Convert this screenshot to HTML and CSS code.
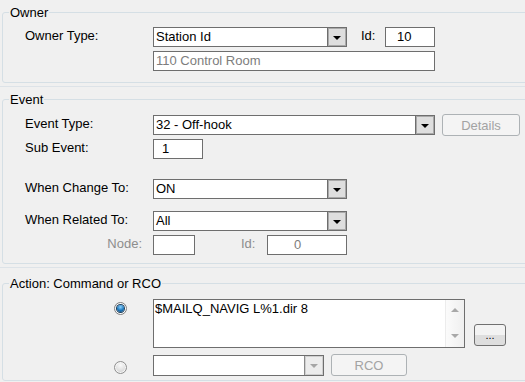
FILE: index.html
```html
<!DOCTYPE html>
<html lang="en">
<head>
    <meta charset="UTF-8">
    <title>Event Trigger</title>
    <link rel="stylesheet" href="styles.css">
</head>
<body>
    <!-- Owner -->
    <fieldset class="group owner">
        <legend>Owner</legend>
        <div class="row">
            <span class="lbl">Owner Type:</span>
            <div class="combo w194"><span class="val">Station Id</span><span class="arrow"></span></div>
            <span class="lbl-id id-owner">Id:</span>
            <div class="box id-box">10</div>
        </div>
        <div class="row gap4">
            <span class="lbl"></span>
            <div class="box dim w282">110 Control Room</div>
        </div>
    </fieldset>
    <div class="sep"></div>

    <!-- Event -->
    <fieldset class="group event">
        <legend>Event</legend>
        <div class="row">
            <span class="lbl">Event Type:</span>
            <div class="combo w282"><span class="val">32 - Off-hook</span><span class="arrow"></span></div>
            <button class="btn off details">Details</button>
        </div>
        <div class="row gap3">
            <span class="lbl">Sub Event:</span>
            <div class="box sub-box">1</div>
        </div>
        <div class="row gap20">
            <span class="lbl">When Change To:</span>
            <div class="combo w194"><span class="val">ON</span><span class="arrow"></span></div>
        </div>
        <div class="row gap12">
            <span class="lbl">When Related To:</span>
            <div class="combo w194"><span class="val">All</span><span class="arrow"></span></div>
        </div>
        <div class="row gap4">
            <span class="lbl right grey">Node:</span>
            <div class="box node-box"></div>
            <span class="lbl-id grey id-node">Id:</span>
            <div class="box dim rel-id">0</div>
        </div>
    </fieldset>
    <div class="sep"></div>

    <!-- Action -->
    <fieldset class="group action">
        <legend>Action: Command or RCO</legend>
        <div class="row top">
            <span class="lbl radio-cell"><span class="radio on"></span></span>
            <div class="memo">
                <div class="memo-text">$MAILQ_NAVIG L%1.dir 8</div>
                <div class="vscroll"><span class="up"></span><span class="down"></span></div>
            </div>
            <button class="btn dots">...</button>
        </div>
        <div class="row gap6">
            <span class="lbl radio-cell"><span class="radio"></span></span>
            <div class="combo w171 rco-combo"><span class="val"></span><span class="arrow"></span></div>
            <button class="btn off rco">RCO</button>
        </div>
    </fieldset>
</body>
</html>
```

FILE: styles.css
```css
body {
    margin: 0;
    background: #f0f0f0;
    font-family: "Liberation Sans", Arial, sans-serif;
    font-size: 13px;
    color: #000;
    overflow: hidden;
}
/* group boxes - right edge runs off the window */
.group {
    width: 540px;
    box-sizing: border-box;
    margin: 0 0 0 2px;
    border: 1px solid #d5dfe5;
    border-radius: 3px;
    padding: 0 0 0 6px;
    min-width: 0;
}
.group legend {
    padding: 0 1px;
    line-height: 15px;
    font-size: 13px;
}
.owner { margin-top: 5px; padding-top: 7px; padding-bottom: 11px; }
.event { margin-top: 5px; padding-top: 7px; padding-bottom: 8px; }
.action { margin-top: 8px; padding-top: 8px; padding-bottom: 4px; }
.sep {
    margin-top: 3px;
    border-top: 1px solid #dde3e8;
}
/* rows */
.row {
    display: flex;
    align-items: center;
    margin-left: 16px;
}
.row.top { align-items: flex-start; }
.gap3 { margin-top: 3px; }
.gap4 { margin-top: 4px; }
.gap6 { margin-top: 6px; }
.gap12 { margin-top: 12px; }
.gap20 { margin-top: 20px; }
.lbl {
    width: 128px;
    flex: none;
    line-height: 15px;
    padding-bottom: 4px;
    white-space: nowrap;
}
.lbl.right { text-align: right; padding-right: 11px; box-sizing: border-box; }
.grey { color: #8d8d8d; }
.lbl-id {
    line-height: 15px;
    padding-bottom: 4px;
    width: 14px;
}
.id-owner { margin-left: 14px; }
.id-node { margin-left: 46px; }
/* edit boxes */
.box {
    box-sizing: border-box;
    height: 20px;
    border: 1px solid #6e6e6e;
    background: #fff;
    line-height: 18px;
    padding-left: 2px;
    white-space: nowrap;
    overflow: hidden;
}
.dim { color: #7d7d7d; }
.w282 { width: 282px; }
.id-box { width: 50px; margin-left: 10px; padding-left: 11px; }
.sub-box { width: 50px; padding-left: 8px; }
.node-box { width: 42px; }
.rel-id { width: 80px; margin-left: 12px; padding-left: 26px; }
/* combo boxes */
.combo {
    box-sizing: border-box;
    height: 20px;
    display: flex;
    border: 1px solid #6e6e6e;
    background: #fff;
}
.combo.w194 { width: 194px; }
.combo.w282 { width: 282px; }
.combo.w171 { width: 171px; height: 21px; }
.combo .val {
    flex: 1;
    line-height: 18px;
    padding-left: 2px;
    white-space: nowrap;
}
.combo .arrow {
    width: 18px;
    flex: none;
    display: flex;
    align-items: center;
    justify-content: center;
    border-left: 1px solid #6e6e6e;
    background: #dedede;
    box-shadow: inset 0 0 0 1px #a9a9a9;
}
.combo .arrow::after {
    content: "";
    margin-top: 2px;
    border-left: 4px solid transparent;
    border-right: 4px solid transparent;
    border-top: 4px solid #000;
}
.rco-combo .arrow { background: #ececec; box-shadow: inset 0 0 0 1px #cfcfcf; border-left-color: #8a8a8a; }
.rco-combo .arrow::after { border-top-color: #a5a5a5; }
/* buttons */
.btn {
    box-sizing: border-box;
    height: 22px;
    padding: 0;
    border: 1px solid #707070;
    border-radius: 3px;
    font-family: inherit;
    font-size: 13px;
    background: linear-gradient(#f3f3f3 50%, #dedede 50%);
}
.btn.off {
    border-color: #adb2b5;
    background: #f4f4f4;
    color: #a3a3a3;
}
.details { width: 78px; margin-left: 7px; }
.rco { width: 76px; margin-left: 7px; }
.dots {
    width: 32px;
    margin-left: 9px;
    margin-top: 25px;
    font-size: 11px;
    line-height: 18px;
}
/* memo with scrollbar */
.memo {
    box-sizing: border-box;
    width: 312px;
    height: 49px;
    display: flex;
    border: 1px solid #6e6e6e;
    background: #fff;
}
.memo-text {
    flex: 1;
    padding: 1px 0 0 1px;
    line-height: 15px;
}
.vscroll {
    width: 19px;
    display: flex;
    flex-direction: column;
    justify-content: space-between;
    align-items: center;
    padding: 8px 0 9px;
    box-sizing: border-box;
    border-left: 1px solid #ececec;
    background: linear-gradient(90deg, #fbfbfb, #efefef);
}
.vscroll .up {
    border-left: 4px solid transparent;
    border-right: 4px solid transparent;
    border-bottom: 4px solid #a8a8a8;
}
.vscroll .down {
    border-left: 4px solid transparent;
    border-right: 4px solid transparent;
    border-top: 4px solid #a8a8a8;
}
/* radio buttons */
.radio-cell {
    display: flex;
    justify-content: flex-end;
    padding: 0 26px 0 0;
    box-sizing: border-box;
}
.row.top .radio-cell { padding-top: 3px; }
.radio-cell .radio { margin-top: 5px; }
.radio {
    box-sizing: border-box;
    width: 13px;
    height: 13px;
    border-radius: 50%;
    border: 1px solid #8f8f8f;
    background: radial-gradient(circle at 50% 30%, #fafafa, #c9c9c9);
    box-shadow: inset 0 0 0 1px #f6f6f6;
    display: flex;
    align-items: center;
    justify-content: center;
}
.row.top .radio { margin-top: 0; }
.radio.on {
    border-color: #7f7f7f;
    background: #e9e9e9;
    box-shadow: inset 0 0 0 1px #fff;
}
.radio.on::after {
    content: "";
    width: 7px;
    height: 7px;
    border-radius: 50%;
    background: radial-gradient(circle at 50% 30%, #8fd3ff, #1b78bd 55%, #0a3a66);
    box-shadow: 0 0 0 1px #1d3f5c;
}
```
